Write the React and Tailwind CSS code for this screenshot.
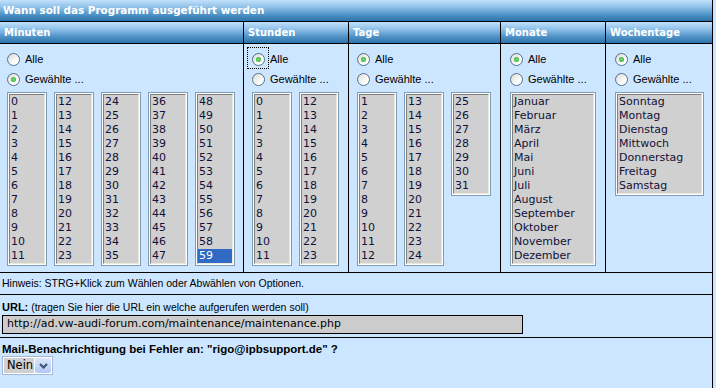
import React from "react";

const range = (a, b) => Array.from({ length: b - a + 1 }, (_, i) => a + i);

const monate = ["Januar", "Februar", "März", "April", "Mai", "Juni", "Juli", "August", "September", "Oktober", "November", "Dezember"];
const wochentage = ["Sonntag", "Montag", "Dienstag", "Mittwoch", "Donnerstag", "Freitag", "Samstag"];

const headBg = "bg-[linear-gradient(to_bottom,#c2e1fb_0%,#8ec0e8_35%,#4f92c6_70%,#2a74ab_100%)]";

const Radio = ({ checked, focus }) => (
  <span className="relative flex h-[13px] w-[13px] shrink-0 items-center justify-center rounded-full border border-[#55708c] bg-[linear-gradient(135deg,#d8d8d2,#ffffff_70%)]">
    {checked && <span className="h-[5px] w-[5px] rounded-full bg-[radial-gradient(circle,#7ee07e,#21a121)]" />}
    {/* dotted focus rectangle */}
    {focus && <span className="absolute -left-[6px] -top-[7px] h-[22px] w-[22px] border border-dotted border-black" />}
  </span>
);

const RadioRow = ({ label, checked, focus }) => (
  <div className="flex h-[13px] items-center gap-[5px]">
    <Radio checked={checked} focus={focus} />
    <span className="leading-[13px]">{label}</span>
  </div>
);

const ListBox = ({ items, width = "w-[40px]", selected }) => (
  <div className={`${width} shrink-0 self-start border border-[#7f9db9] bg-white p-px`}>
    <div className="border border-t-[#808080] border-l-[#808080] border-r-[#ece9d8] border-b-[#ece9d8] bg-[#d0d0d0] font-['DejaVu_Sans',sans-serif] text-[11px] leading-[14px] text-[#10103a]">
      {items.map((it) => (
        <div key={it} className={`h-[14px] pl-px ${selected === it ? "bg-[#316ac5] text-white" : ""}`}>
          {it}
        </div>
      ))}
    </div>
  </div>
);

const Column = ({ title, width, pad, focus, alle, children }) => (
  <div className={`${width} shrink-0 border-r border-black last:border-r-0`}>
    <div className={`flex h-[22px] items-center border-b border-black pl-[4px] font-['DejaVu_Sans',sans-serif] text-[10px] font-bold text-white ${headBg}`}>
      {title}
    </div>
    <div className={`flex h-[228px] flex-col pt-[9px] ${pad}`}>
      <div className="flex flex-col gap-[7px]">
        <RadioRow label="Alle" checked={alle} focus={focus} />
        <RadioRow label="Gewählte ..." checked={!alle} />
      </div>
      <div className="mt-[6px] flex gap-[7px]">{children}</div>
    </div>
  </div>
);

export default function App() {
  return (
    <div className="h-[388px] w-[716px] overflow-hidden bg-[#cce6ff] font-['Liberation_Sans',Arial,sans-serif] text-[11px] text-black">
      <div className="h-[388px] w-[713px] border-r border-black">
        <div className={`flex h-[22px] items-center border-b border-black pl-[3px] font-['DejaVu_Sans',sans-serif] text-[10.4px] font-bold text-white ${headBg}`}>
          Wann soll das Programm ausgeführt werden
        </div>

        <div className="flex border-b border-black">
          <Column title="Minuten" width="w-[244px]" pad="pl-[7px]" alle={false}>
            <ListBox items={range(0, 11)} />
            <ListBox items={range(12, 23)} />
            <ListBox items={range(24, 35)} />
            <ListBox items={range(36, 47)} />
            <ListBox items={range(48, 59)} selected={59} />
          </Column>
          <Column title="Stunden" width="w-[105px]" pad="pl-[8px]" alle focus>
            <ListBox items={range(0, 11)} />
            <ListBox items={range(12, 23)} />
          </Column>
          <Column title="Tage" width="w-[152px]" pad="pl-[8px]" alle>
            <ListBox items={range(1, 12)} />
            <ListBox items={range(13, 24)} />
            <ListBox items={range(25, 31)} />
          </Column>
          <Column title="Monate" width="w-[105px]" pad="pl-[9px]" alle>
            <ListBox items={monate} width="w-[86px]" />
          </Column>
          <Column title="Wochentage" width="flex-1" pad="pl-[9px]" alle>
            <ListBox items={wochentage} width="w-[89px]" />
          </Column>
        </div>

        <div className="flex h-[22px] items-center border-b border-black pl-[2px] text-[10.5px]">
          Hinweis: STRG+Klick zum Wählen oder Abwählen von Optionen.
        </div>

        <div className="h-[43px] border-b border-black pl-[2px] pt-[5px]">
          <div className="text-[10.5px] leading-[14px]">
            <span className="text-[11px] font-bold">URL:</span> (tragen Sie hier die URL ein welche aufgerufen werden soll)
          </div>
          <div className="mt-px flex h-[19px] w-[521px] items-center border border-black bg-[#cccccc] pl-[4px] font-['DejaVu_Sans',sans-serif] text-[11px]">
            http://ad.vw-audi-forum.com/maintenance/maintenance.php
          </div>
        </div>

        <div className="pl-[2px] pt-[4px]">
          <div className="text-[11.5px] font-bold leading-[14px]">Mail-Benachrichtigung bei Fehler an: "rigo@ipbsupport.de" ?</div>
          <div className="flex h-[19px] w-[51px] border border-[#a5b9d7] bg-white p-px">
            <div className="flex flex-1 items-center bg-[#d0d0d0] pl-[3px] font-['DejaVu_Sans',sans-serif] text-[11.5px]">Nein</div>
            <div className="ml-px flex w-[16px] items-center justify-center rounded-[2px] bg-[linear-gradient(to_bottom,#dbe6fd,#b4c8f5)]">
              <svg width="9" height="6" viewBox="0 0 9 6">
                <path d="M1 1 L4.5 4.5 L8 1" fill="none" stroke="#3f5478" strokeWidth="2.2" />
              </svg>
            </div>
          </div>
        </div>
      </div>
    </div>
  );
}
